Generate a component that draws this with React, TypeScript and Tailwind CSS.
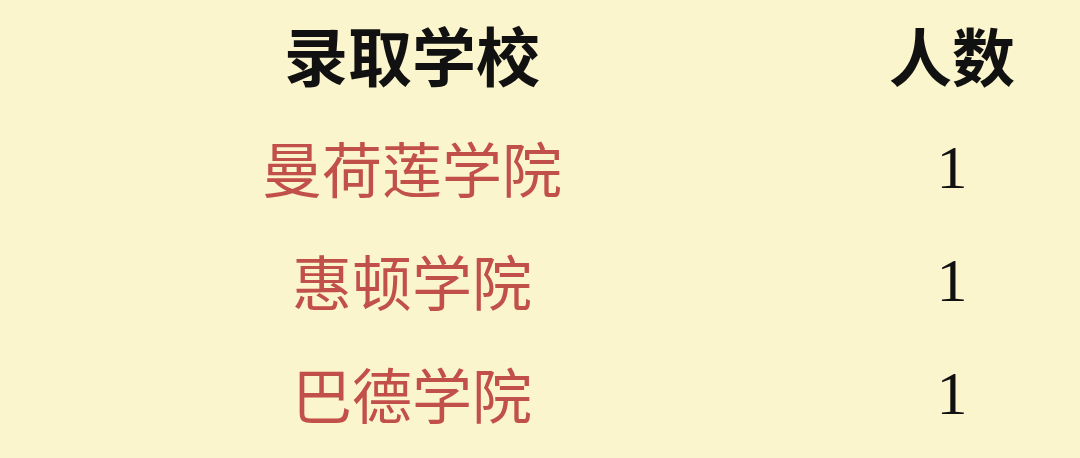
export default function App() {
  const rows = ["曼荷莲学院", "惠顿学院", "巴德学院"];
  const cjk = '"Noto Sans CJK SC", "Noto Sans", sans-serif';
  return (
    <div className="w-[1080px] h-[458px] bg-[#fbf5cd] overflow-hidden">
      <div className="grid grid-cols-[824px_256px] -mt-[4px]">
        <div className="h-[114px] flex items-center justify-center text-[64px] font-bold text-[#111] leading-none" style={{ fontFamily: cjk }}>
          录取学校
        </div>
        <div className="h-[114px] flex items-center justify-center text-[63px] font-bold text-[#111] leading-none" style={{ fontFamily: cjk }}>
          人数
        </div>
        {rows.map((r) => (
          <>
            <div key={r + "a"} className="h-[113px] flex items-center justify-center text-[60px] text-[#c2504a] leading-none" style={{ fontFamily: cjk }}>
              {r}
            </div>
            <div key={r + "b"} className="h-[113px] flex items-center justify-center text-[62px] text-[#111] leading-none font-['Liberation_Serif',serif]">
              1
            </div>
          </>
        ))}
      </div>
    </div>
  );
}
